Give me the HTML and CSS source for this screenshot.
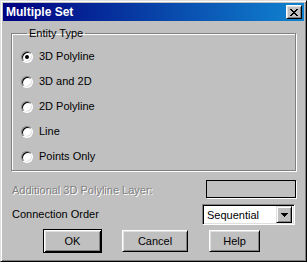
FILE: index.html
```html
<!DOCTYPE html>
<html>
<head>
<meta charset="utf-8">
<link rel="stylesheet" href="styles.css">
</head>
<body>
<div class="window">
  <div class="titlebar">
    <span class="title">Multiple Set</span>
    <span class="close">
      <svg width="8" height="7" viewBox="0 0 8 7" shape-rendering="crispEdges">
        <rect x="0" y="0" width="2" height="1"/><rect x="6" y="0" width="2" height="1"/>
        <rect x="1" y="1" width="2" height="1"/><rect x="5" y="1" width="2" height="1"/>
        <rect x="2" y="2" width="4" height="1"/>
        <rect x="3" y="3" width="2" height="1"/>
        <rect x="2" y="4" width="4" height="1"/>
        <rect x="1" y="5" width="2" height="1"/><rect x="5" y="5" width="2" height="1"/>
        <rect x="0" y="6" width="2" height="1"/><rect x="6" y="6" width="2" height="1"/>
      </svg>
    </span>
  </div>
  <div class="body">
    <fieldset class="group">
      <legend class="legend">Entity Type</legend>
      <div class="radio-row"><span class="radio checked"></span><span>3D Polyline</span></div>
      <div class="radio-row"><span class="radio"></span><span>3D and 2D</span></div>
      <div class="radio-row"><span class="radio"></span><span>2D Polyline</span></div>
      <div class="radio-row"><span class="radio"></span><span>Line</span></div>
      <div class="radio-row"><span class="radio"></span><span>Points Only</span></div>
    </fieldset>
    <div class="field-row layer-row">
      <span class="label disabled">Additional 3D Polyline Layer:</span>
      <span class="textbox"></span>
    </div>
    <div class="field-row order-row">
      <span class="label">Connection Order</span>
      <div class="combo">
        <span class="combo-text">Sequential</span>
        <span class="dropbtn">
          <svg width="7" height="4" viewBox="0 0 7 4" shape-rendering="crispEdges">
            <rect x="0" y="0" width="7" height="1"/>
            <rect x="1" y="1" width="5" height="1"/>
            <rect x="2" y="2" width="3" height="1"/>
            <rect x="3" y="3" width="1" height="1"/>
          </svg>
        </span>
      </div>
    </div>
    <div class="buttons">
      <span class="btn default btn-ok">OK</span>
      <span class="btn btn-cancel">Cancel</span>
      <span class="btn btn-help">Help</span>
    </div>
  </div>
</div>
</body>
</html>
```

FILE: styles.css
```css
html, body {
  margin: 0;
  padding: 0;
  background: #c0c0c0;
}

.window {
  box-sizing: border-box;
  width: 307px;
  height: 262px;
  background: #c0c0c0;
  border: 1px solid;
  border-color: #dfdfdf #000 #000 #dfdfdf;
  box-shadow: inset 1px 1px #fff, inset -1px -1px #808080;
  padding: 2px;
  font-family: "Liberation Sans", Arial, sans-serif;
  font-size: 11px;
  line-height: 13px;
  color: #000;
  display: flex;
  flex-direction: column;
}

.titlebar {
  height: 18px;
  flex: none;
  display: flex;
  align-items: center;
  justify-content: space-between;
  padding: 0 2px 0 3px;
  background: linear-gradient(to right, #000080, #1084d0);
}

.title {
  color: #fff;
  font-weight: bold;
  font-size: 12px;
}

.close {
  box-sizing: border-box;
  width: 16px;
  height: 14px;
  background: #c0c0c0;
  border: 1px solid;
  border-color: #fff #000 #000 #fff;
  box-shadow: inset 1px 1px #dfdfdf, inset -1px -1px #808080;
  display: flex;
  align-items: center;
  justify-content: center;
  padding-top: 1px;
}

.close svg {
  display: block;
  fill: #000;
  margin-left: -1px;
}

.body {
  flex: 1;
  display: flex;
  flex-direction: column;
}

.group {
  margin: 6px 8px 0 8px;
  padding: 4px 0 1px 9px;
  border: 1px solid #808080;
  box-shadow: inset 1px 1px #fff, 1px 1px #fff;
  min-width: 0;
}

.legend {
  margin-left: 6px;
  padding: 0 2px;
  line-height: 13px;
}

.radio-row {
  height: 25px;
  display: flex;
  align-items: center;
  gap: 6px;
}

.radio {
  box-sizing: border-box;
  width: 12px;
  height: 12px;
  border-radius: 50%;
  border: 1px solid;
  border-color: #808080 #fff #fff #808080;
  background: #fff;
  box-shadow: inset 1px 1px #000, inset -1px -1px #dfdfdf;
  display: flex;
  align-items: center;
  justify-content: center;
  flex: none;
}

.radio.checked::after {
  content: "";
  width: 4px;
  height: 4px;
  border-radius: 50%;
  background: #000;
}

.field-row {
  display: flex;
  align-items: center;
  justify-content: space-between;
  padding-left: 9px;
  margin-right: 8px;
}

.layer-row {
  margin-top: 9px;
  height: 18px;
}

.layer-row .label {
  padding-top: 3px;
}

.disabled {
  color: #808080;
  text-shadow: 1px 1px #fff;
}

.textbox {
  box-sizing: border-box;
  width: 90px;
  height: 18px;
  border: 1px solid #000;
  box-shadow: 1px 1px #fff;
  background: #c0c0c0;
}

.order-row {
  margin-top: 6px;
  height: 21px;
}

.combo {
  box-sizing: border-box;
  width: 93px;
  height: 21px;
  margin-right: 1px;
  background: #fff;
  border: 1px solid;
  border-color: #808080 #fff #fff #808080;
  box-shadow: inset 1px 1px #000, inset -1px -1px #dfdfdf;
  display: flex;
  align-items: center;
  justify-content: space-between;
  padding: 2px 2px 2px 4px;
}

.combo-text {
  font-size: 11px;
  padding-top: 1px;
}

.dropbtn {
  box-sizing: border-box;
  width: 16px;
  height: 17px;
  background: #c0c0c0;
  border: 1px solid;
  border-color: #dfdfdf #000 #000 #dfdfdf;
  box-shadow: inset 1px 1px #fff, inset -1px -1px #808080;
  display: flex;
  align-items: center;
  justify-content: center;
}

.dropbtn svg {
  display: block;
  fill: #000;
}

.buttons {
  margin-top: 4px;
  height: 24px;
  display: flex;
  align-items: center;
  padding-left: 40px;
  gap: 20px;
}

.btn {
  box-sizing: border-box;
  height: 22px;
  display: flex;
  align-items: center;
  justify-content: center;
  background: #c0c0c0;
  border: 1px solid;
  border-color: #fff #000 #000 #fff;
  box-shadow: inset 1px 1px #dfdfdf, inset -1px -1px #808080;
  font-size: 11px;
}

.btn.default {
  height: 24px;
  border: 1px solid #000;
  box-shadow: inset 1px 1px #fff, inset -1px -1px #000, inset 2px 2px #dfdfdf, inset -2px -2px #808080;
}

.btn-ok { width: 59px; }
.btn-cancel { width: 66px; }
.btn-help { width: 51px; margin-left: 1px; }
```
